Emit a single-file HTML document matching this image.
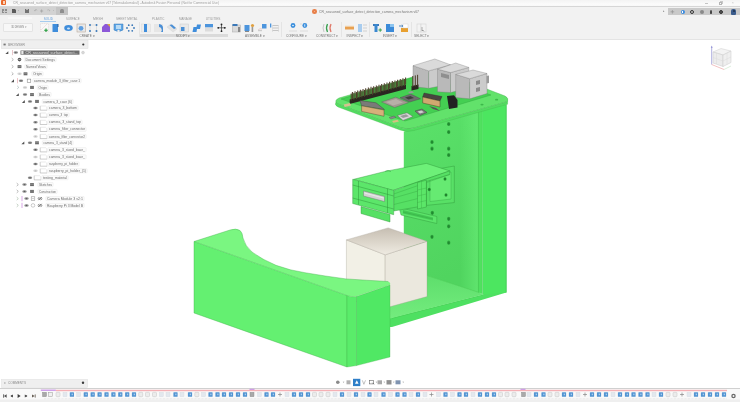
<!DOCTYPE html>
<html><head><meta charset="utf-8">
<style>
*{box-sizing:border-box}
html,body{margin:0;padding:0;width:740px;height:402px;overflow:hidden;background:#fff;font-family:"Liberation Sans",sans-serif;color:#444}
.a{position:absolute}
.t{white-space:nowrap;line-height:1}
</style></head><body>
<svg class="a" style="left:0;top:0" width="740" height="402" viewBox="0 0 740 402">
<defs>
<linearGradient id="gface" x1="0" y1="0" x2="0" y2="1"><stop offset="0" stop-color="#5de566"/><stop offset="1" stop-color="#62e86b"/></linearGradient>
<linearGradient id="gcubetop" x1="0.5" y1="0" x2="0.5" y2="1"><stop offset="0" stop-color="#c6beb2"/><stop offset="0.55" stop-color="#ddd7cc"/><stop offset="1" stop-color="#efebe2"/></linearGradient>
<linearGradient id="gfloor" x1="0" y1="0" x2="0" y2="1"><stop offset="0" stop-color="#5ede6c"/><stop offset="1" stop-color="#74ec7e"/></linearGradient><linearGradient id="gcol" x1="0" y1="0" x2="0.25" y2="1"><stop offset="0" stop-color="#5be26a"/><stop offset="0.5" stop-color="#55da64"/><stop offset="1" stop-color="#50d45f"/></linearGradient><linearGradient id="gcolh" x1="0" y1="0" x2="1" y2="0"><stop offset="0.75" stop-color="#6af078" stop-opacity="0"/><stop offset="1" stop-color="#6af078" stop-opacity="0.6"/></linearGradient>
</defs>
<polygon points="403.8,131.5 479,110.8 479,293 403.8,268" fill="url(#gcol)" />
<polygon points="403.8,131.5 479,110.8 479,293 403.8,268" fill="url(#gcolh)" />
<polygon points="478.4,111 482.4,110 482.4,294 478.4,293" fill="#50e15f" />
<path d="M478.4,111 V293 M482.4,110 V294" stroke="#38b848" stroke-width="0.5"/>
<polygon points="482.4,110 506.3,104.5 506.3,292.5 392,327 390,327 390,318 483.4,294.5" fill="#4ee061" />
<polygon points="482.4,110 506.3,104.5 506.3,292.5 482.8,294.5" fill="#4ce660" />
<path d="M506.2,104.5 V292.5" stroke="#3cbf4c" stroke-width="0.6"/>
<line x1="392" y1="318.3" x2="483.4" y2="294.6" stroke="#45c34e" stroke-width="0.5"/>
<polygon points="390,300 428,275.5 479,292.5 483.4,294.5 390,318.5" fill="url(#gfloor)" />
<line x1="404" y1="268" x2="479" y2="292.5" stroke="#47c850" stroke-width="0.5"/>
<ellipse cx="448.7" cy="124" rx="1.7" ry="2.1" fill="#34a842"/><ellipse cx="448.7" cy="124.2" rx="1.1" ry="1.4" fill="#208a30"/>
<ellipse cx="448.7" cy="132" rx="1.7" ry="2.1" fill="#34a842"/><ellipse cx="448.7" cy="132.2" rx="1.1" ry="1.4" fill="#208a30"/>
<ellipse cx="432" cy="142" rx="1.7" ry="2.1" fill="#34a842"/><ellipse cx="432" cy="142.2" rx="1.1" ry="1.4" fill="#208a30"/>
<ellipse cx="432" cy="148.7" rx="1.7" ry="2.1" fill="#34a842"/><ellipse cx="432" cy="148.89999999999998" rx="1.1" ry="1.4" fill="#208a30"/>
<ellipse cx="448.7" cy="148.7" rx="1.7" ry="2.1" fill="#34a842"/><ellipse cx="448.7" cy="148.89999999999998" rx="1.1" ry="1.4" fill="#208a30"/>
<ellipse cx="448.7" cy="155" rx="1.7" ry="2.1" fill="#34a842"/><ellipse cx="448.7" cy="155.2" rx="1.1" ry="1.4" fill="#208a30"/>
<ellipse cx="429.3" cy="190.4" rx="1.7" ry="2.1" fill="#34a842"/><ellipse cx="429.3" cy="190.6" rx="1.1" ry="1.4" fill="#208a30"/>
<ellipse cx="432.3" cy="212.8" rx="1.7" ry="2.1" fill="#34a842"/><ellipse cx="432.3" cy="213.0" rx="1.1" ry="1.4" fill="#208a30"/>
<ellipse cx="448.7" cy="218.8" rx="1.7" ry="2.1" fill="#34a842"/><ellipse cx="448.7" cy="219.0" rx="1.1" ry="1.4" fill="#208a30"/>
<ellipse cx="448.7" cy="226.3" rx="1.7" ry="2.1" fill="#34a842"/><ellipse cx="448.7" cy="226.5" rx="1.1" ry="1.4" fill="#208a30"/>
<ellipse cx="432" cy="236.8" rx="1.7" ry="2.1" fill="#34a842"/><ellipse cx="432" cy="237.0" rx="1.1" ry="1.4" fill="#208a30"/>
<ellipse cx="448.7" cy="242.7" rx="1.7" ry="2.1" fill="#34a842"/><ellipse cx="448.7" cy="242.89999999999998" rx="1.1" ry="1.4" fill="#208a30"/>
<polygon points="346.4,239.9 385.2,254.8 385.2,312 346.4,298" fill="#f2f0e6" stroke="#a59f93" stroke-width="0.35" stroke-linejoin="round" />
<polygon points="385.2,254.8 427,241.3 427,296.6 385.2,308" fill="#ebe8de" stroke="#a59f93" stroke-width="0.35" stroke-linejoin="round" />
<polygon points="346.4,239.9 388.2,227.9 427,241.3 385.2,254.8" fill="url(#gcubetop)" stroke="#a59f93" stroke-width="0.35" stroke-linejoin="round" />
<path d="M194,241.5 L230,230 Q236,228 240,230.5 Q242.5,232.5 243,238 Q245,246 252,252 Q262,259.5 276,265.3 Q290,270.5 305,272.7 Q326,276.3 346,278.9 Q366,280.3 388.2,281.5 Q391,282.5 390,284.8 L357,296 Q352,297.5 347,295.5 Z" fill="#7af681" />
<polygon points="194,241.5 347,295.5 347,367 194,313" fill="#64f071" stroke="#3fae48" stroke-width="0.4" stroke-linejoin="round" />
<path d="M347,295.5 Q352,297.5 356.5,296.5 L356.5,365.6 L347,367 Z" fill="#5aec6a" stroke="#3fae48" stroke-width="0.3" stroke-linejoin="round" />
<polygon points="356.5,296.5 390,285 390,357 356.5,365.6" fill="#50e864" stroke="#3fae48" stroke-width="0.3" stroke-linejoin="round" />
<path d="M194,241.5 L230,230 Q236,228 240,230.5 Q242.5,232.5 243,238 Q245,246 252,252 Q262,259.5 276,265.3 Q290,270.5 305,272.7 Q326,276.3 346,278.9 Q366,280.3 388.2,281.5" fill="none" stroke="#3fae48" stroke-width="0.4" stroke-linejoin="round" />
<polygon points="426.4,171 454.3,166 454.3,202.6 426.4,205.4" fill="#58e066" stroke="#2a8f36" stroke-width="0.4" stroke-linejoin="round" />
<polygon points="430,176 451,172 451,199 430,201.5" fill="#66ea72" stroke="#2a8f36" stroke-width="0.3" stroke-linejoin="round" />
<ellipse cx="429.3" cy="189.5" rx="1.5" ry="1.8" fill="#2a9a38"/><ellipse cx="429.3" cy="189.5" rx="0.9" ry="1.1" fill="#1e7a2a"/>
<ellipse cx="446" cy="195" rx="1.5" ry="1.8" fill="#2a9a38"/><ellipse cx="446" cy="195" rx="0.9" ry="1.1" fill="#1e7a2a"/>
<ellipse cx="445" cy="179" rx="1.5" ry="1.8" fill="#2a9a38"/><ellipse cx="445" cy="179" rx="0.9" ry="1.1" fill="#1e7a2a"/>
<polygon points="399,207.5 436.8,216.5 436.8,223.5 401,215" fill="#5ce46a" stroke="#2a8f36" stroke-width="0.4" stroke-linejoin="round" />
<polygon points="403,210 433,217.5 433,220.5 403,213.5" fill="#44c854" />
<path d="M403,212 L433,219" stroke="#2f9e3a" stroke-width="0.35"/>
<polygon points="353.6,179.3 386,171.2 426.4,163.4 449.7,170.9 392.8,190.4" fill="#6df078" stroke="#2a8f36" stroke-width="0.4" stroke-linejoin="round" />
<path d="M385,171.5 q3,-2 6,0" stroke="#2f9e3a" stroke-width="0.5" fill="#60e06c"/>
<polygon points="393.7,190.4 449.7,170.9 449.7,174.5 426.4,181.5 426.4,205.4 393.7,211" fill="#56e064" stroke="#2a8f36" stroke-width="0.4" stroke-linejoin="round" />
<path d="M393.7,198 L418,191 M393.7,204.5 L418,198.5 M393.7,194 L449.7,174.5" stroke="#2f9e3a" stroke-width="0.35" fill="none"/>
<polygon points="417.5,182.5 426.4,180.2 426.4,207 417.5,209" fill="#5be668" stroke="#2a8f36" stroke-width="0.4" stroke-linejoin="round" />
<path d="M417.5,190 L426.4,188 M417.5,196 L426.4,194 M417.5,202.5 L426.4,200.5 M421.5,181.5 v26.5" stroke="#2f9e3a" stroke-width="0.3" fill="none"/>
<polygon points="361,206.5 390,214.5 390,222 361,213.5" fill="#56e064" stroke="#2a8f36" stroke-width="0.4" stroke-linejoin="round" />
<polygon points="352.7,179.3 393.7,190.4 393.7,214.7 352.7,203.5" fill="#5ce66a" stroke="#2a8f36" stroke-width="0.4" stroke-linejoin="round" />
<path d="M352.7,185 L393.7,196 M352.7,198 L393.7,209 M358.5,181 v23.5 M387.5,188.8 v24" stroke="#2a8f36" stroke-width="0.45" fill="none"/>
<polygon points="363.5,191 384.5,196.5 384.5,201.5 363.5,196" fill="#d4d4d4" stroke="#6a6a6a" stroke-width="0.4" stroke-linejoin="round" />
<path d="M364.5,193 L383.5,198" stroke="#f4f4f4" stroke-width="0.7"/>
<path d="M339,98 L437,70 L505,96 Q509,98 507.6,101.6 L414,128 Q407,130 400,127.5 L338,104 Q333,101 339,98 Z" fill="#62e26b" stroke="#3fae48" stroke-width="0.4" stroke-linejoin="round" />
<path d="M336,102 Q334,105 338,107 L400,130 Q407,132.5 414,130.5 L507.6,104.2 L507.6,101.6 L414,128 Q407,130 400,127.5 L338,104 Z" fill="#52dc60" stroke="#3fae48" stroke-width="0.3" stroke-linejoin="round" />
<polygon points="341,99 428,73 491,95 405,121" fill="#44cf52" stroke="#2a9c38" stroke-width="0.35" stroke-linejoin="round" />
<ellipse cx="482" cy="104.6" rx="1.6" ry="0.9" fill="#3cb84a"/>
<ellipse cx="496.6" cy="99.7" rx="1.6" ry="0.9" fill="#3cb84a"/>
<polygon points="349.7,99.5 406,84.5 406,89 349.7,104" fill="#2a2720" />
<line x1="351.20" y1="100.50" x2="351.20" y2="93.50" stroke="#4e3e2a" stroke-width="1.05"/>
<line x1="353.86" y1="99.78" x2="353.86" y2="92.78" stroke="#4e3e2a" stroke-width="1.05"/>
<line x1="356.52" y1="99.06" x2="356.52" y2="92.06" stroke="#4e3e2a" stroke-width="1.05"/>
<line x1="359.18" y1="98.34" x2="359.18" y2="91.34" stroke="#4e3e2a" stroke-width="1.05"/>
<line x1="361.84" y1="97.62" x2="361.84" y2="90.62" stroke="#4e3e2a" stroke-width="1.05"/>
<line x1="364.50" y1="96.90" x2="364.50" y2="89.90" stroke="#4e3e2a" stroke-width="1.05"/>
<line x1="367.16" y1="96.18" x2="367.16" y2="89.18" stroke="#4e3e2a" stroke-width="1.05"/>
<line x1="369.82" y1="95.46" x2="369.82" y2="88.46" stroke="#4e3e2a" stroke-width="1.05"/>
<line x1="372.48" y1="94.74" x2="372.48" y2="87.74" stroke="#4e3e2a" stroke-width="1.05"/>
<line x1="375.14" y1="94.02" x2="375.14" y2="87.02" stroke="#4e3e2a" stroke-width="1.05"/>
<line x1="377.80" y1="93.30" x2="377.80" y2="86.30" stroke="#4e3e2a" stroke-width="1.05"/>
<line x1="380.46" y1="92.58" x2="380.46" y2="85.58" stroke="#4e3e2a" stroke-width="1.05"/>
<line x1="383.12" y1="91.86" x2="383.12" y2="84.86" stroke="#4e3e2a" stroke-width="1.05"/>
<line x1="385.78" y1="91.14" x2="385.78" y2="84.14" stroke="#4e3e2a" stroke-width="1.05"/>
<line x1="388.44" y1="90.42" x2="388.44" y2="83.42" stroke="#4e3e2a" stroke-width="1.05"/>
<line x1="391.10" y1="89.70" x2="391.10" y2="82.70" stroke="#4e3e2a" stroke-width="1.05"/>
<line x1="393.76" y1="88.98" x2="393.76" y2="81.98" stroke="#4e3e2a" stroke-width="1.05"/>
<line x1="396.42" y1="88.26" x2="396.42" y2="81.26" stroke="#4e3e2a" stroke-width="1.05"/>
<line x1="399.08" y1="87.54" x2="399.08" y2="80.54" stroke="#4e3e2a" stroke-width="1.05"/>
<line x1="401.74" y1="86.82" x2="401.74" y2="79.82" stroke="#4e3e2a" stroke-width="1.05"/>
<line x1="404.40" y1="86.10" x2="404.40" y2="79.10" stroke="#4e3e2a" stroke-width="1.05"/>
<line x1="352.40" y1="98.90" x2="352.40" y2="91.90" stroke="#4e3e2a" stroke-width="1.05"/>
<line x1="355.06" y1="98.18" x2="355.06" y2="91.18" stroke="#4e3e2a" stroke-width="1.05"/>
<line x1="357.72" y1="97.46" x2="357.72" y2="90.46" stroke="#4e3e2a" stroke-width="1.05"/>
<line x1="360.38" y1="96.74" x2="360.38" y2="89.74" stroke="#4e3e2a" stroke-width="1.05"/>
<line x1="363.04" y1="96.02" x2="363.04" y2="89.02" stroke="#4e3e2a" stroke-width="1.05"/>
<line x1="365.70" y1="95.30" x2="365.70" y2="88.30" stroke="#4e3e2a" stroke-width="1.05"/>
<line x1="368.36" y1="94.58" x2="368.36" y2="87.58" stroke="#4e3e2a" stroke-width="1.05"/>
<line x1="371.02" y1="93.86" x2="371.02" y2="86.86" stroke="#4e3e2a" stroke-width="1.05"/>
<line x1="373.68" y1="93.14" x2="373.68" y2="86.14" stroke="#4e3e2a" stroke-width="1.05"/>
<line x1="376.34" y1="92.42" x2="376.34" y2="85.42" stroke="#4e3e2a" stroke-width="1.05"/>
<line x1="379.00" y1="91.70" x2="379.00" y2="84.70" stroke="#4e3e2a" stroke-width="1.05"/>
<line x1="381.66" y1="90.98" x2="381.66" y2="83.98" stroke="#4e3e2a" stroke-width="1.05"/>
<line x1="384.32" y1="90.26" x2="384.32" y2="83.26" stroke="#4e3e2a" stroke-width="1.05"/>
<line x1="386.98" y1="89.54" x2="386.98" y2="82.54" stroke="#4e3e2a" stroke-width="1.05"/>
<line x1="389.64" y1="88.82" x2="389.64" y2="81.82" stroke="#4e3e2a" stroke-width="1.05"/>
<line x1="392.30" y1="88.10" x2="392.30" y2="81.10" stroke="#4e3e2a" stroke-width="1.05"/>
<line x1="394.96" y1="87.38" x2="394.96" y2="80.38" stroke="#4e3e2a" stroke-width="1.05"/>
<line x1="397.62" y1="86.66" x2="397.62" y2="79.66" stroke="#4e3e2a" stroke-width="1.05"/>
<line x1="400.28" y1="85.94" x2="400.28" y2="78.94" stroke="#4e3e2a" stroke-width="1.05"/>
<line x1="402.94" y1="85.22" x2="402.94" y2="78.22" stroke="#4e3e2a" stroke-width="1.05"/>
<line x1="405.60" y1="84.50" x2="405.60" y2="77.50" stroke="#4e3e2a" stroke-width="1.05"/>
<polygon points="413,65.7 428.7,70.9 428.7,88.3 413,86.6" fill="#b9b9b9" stroke="#7a7a7a" stroke-width="0.35" stroke-linejoin="round" />
<polygon points="428.7,70.9 450.5,64.8 450.5,84 428.7,88.3" fill="#cbcbcb" stroke="#7a7a7a" stroke-width="0.35" stroke-linejoin="round" />
<polygon points="413,65.7 434.8,59 450.5,64.8 428.7,70.9" fill="#dadada" stroke="#7a7a7a" stroke-width="0.35" stroke-linejoin="round" />
<polygon points="437.5,69.2 450.5,72.6 450.5,92.5 437.5,91.8" fill="#b9b9b9" stroke="#7a7a7a" stroke-width="0.35" stroke-linejoin="round" />
<polygon points="450.5,72.6 468.8,67.4 468.8,88 450.5,92.5" fill="#cbcbcb" stroke="#7a7a7a" stroke-width="0.35" stroke-linejoin="round" />
<polygon points="437.5,69.2 455.7,63 468.8,67.4 450.5,72.6" fill="#dadada" stroke="#7a7a7a" stroke-width="0.35" stroke-linejoin="round" />
<polygon points="441,73 449,75 449,79 441,77" fill="#8f8f8f" />
<polygon points="455.7,74.4 469.7,78.7 469.7,98.8 455.7,97.5" fill="#b9b9b9" stroke="#7a7a7a" stroke-width="0.35" stroke-linejoin="round" />
<polygon points="469.7,78.7 487,73.5 487,93.5 469.7,98.8" fill="#cbcbcb" stroke="#7a7a7a" stroke-width="0.35" stroke-linejoin="round" />
<polygon points="455.7,74.4 473,70 487,73.5 469.7,78.7" fill="#dadada" stroke="#7a7a7a" stroke-width="0.35" stroke-linejoin="round" />
<polygon points="476,81 480,80 480,84 476,85" fill="#8a8a8a" />
<polygon points="476,88 480,87 480,91 476,92" fill="#8a8a8a" />
<polygon points="486.5,76 489,75.5 489,83 486.5,83.5" fill="#9a9a9a" />
<polygon points="411.5,86 418.5,84.5 418.5,89 411.5,90.5" fill="#2a2720" />
<line x1="412.8" y1="87" x2="412.8" y2="76" stroke="#4e3e2a" stroke-width="1"/>
<line x1="415.3" y1="86.4" x2="415.3" y2="75.4" stroke="#4e3e2a" stroke-width="1"/>
<line x1="417.6" y1="85.8" x2="417.6" y2="74.8" stroke="#4e3e2a" stroke-width="1"/>
<polygon points="360,100.5 376,102.8 384.5,109.5 361.6,105.8" fill="#7a7a78" stroke="#3a3a3a" stroke-width="0.4" stroke-linejoin="round" />
<polygon points="361.6,105.8 384,110 384,116.3 361.6,111.4" fill="#d6b07a" stroke="#4a3a2a" stroke-width="0.4" stroke-linejoin="round" />
<polygon points="343.7,104.5 350,103 351,105.5 344.7,107" fill="#d8c090" />
<polygon points="381.6,102 395.7,97.2 408.6,102.6 394.6,107.5" fill="#a39a92" stroke="#555" stroke-width="0.35" stroke-linejoin="round" />
<polygon points="386,102 396,99 403,102.5 393,105.5" fill="#b8b0a8" />
<polygon points="400,97.7 410.8,94 420.5,98.8 409.7,102" fill="#6e6e6e" stroke="#444" stroke-width="0.35" stroke-linejoin="round" />
<polygon points="405,97.5 410.5,96 414,98 408.5,99.6" fill="#3e3e3e" />
<polygon points="408,92 412,91 414,92.5 410,93.5" fill="#999" />
<polygon points="424,93 442,96.5 440,101 422.7,97" fill="#4a4540" stroke="#2a2a2a" stroke-width="0.35" stroke-linejoin="round" />
<polygon points="422.7,97 440,101 440,107 422.7,103" fill="#cfa870" stroke="#3a2a1a" stroke-width="0.4" stroke-linejoin="round" />
<polygon points="447,96 454,95.3 457.5,100 457.5,107.5 449,109" fill="#222" />
<polygon points="429,106 436,108 440,111 433,109" fill="#555" />
<polygon points="397.3,115.5 407,112.8 413,116.5 403,120.4" fill="#d8d8d8" stroke="#555" stroke-width="0.4" stroke-linejoin="round" />
<polygon points="400,116 406,114.3 409,116.3 403,118" fill="#9a9a9a" />
<polygon points="389,117.5 394,116 396,117.5 391,119" fill="#8a8a8a" stroke="#444" stroke-width="0.3" stroke-linejoin="round" />
<polygon points="415,111 422,109 427,112.5 420,115.5" fill="#7a7a7a" stroke="#333" stroke-width="0.4" stroke-linejoin="round" />
<polygon points="417.5,111.5 421.5,110.4 424,112.3 420,113.5" fill="#cfcfcf" />
<polygon points="392,121 397.5,119.8 399,121.5 393.5,122.8" fill="#d8c080" />
</svg>
<div class="a" style="left:0px;top:0px;width:740px;height:6.5px;background:linear-gradient(#f3f3f3,#fbfbfb 60%,#f6f6f6)"></div>
<div class="a" style="left:0px;top:6.3px;width:740px;height:1px;background:#d6d6d6"></div>
<div class="a" style="left:1px;top:0px;width:5px;height:5px;background:#e9692c;border-radius:1px"></div>
<div class="a" style="left:2.5px;top:1px;width:2px;height:3px;background:#fbd3b8"></div>
<div class="a" style="left:705px;top:3.2px;width:3px;height:0.5px;background:#c4c4c4"></div>
<div class="a" style="left:719px;top:1.8px;width:3px;height:3px;border:0.5px solid #b5b5b5"></div>
<div class="a" style="left:720px;top:1px;width:3px;height:3px;border-top:0.5px solid #c8c8c8;border-right:0.5px solid #c8c8c8"></div>
<div class="a" style="left:0px;top:7.3px;width:740px;height:7.7px;background:#f2f2f2"></div>
<div class="a" style="left:0px;top:6.8px;width:68px;height:8.1px;background:#d2d2d2"></div>
<div class="a" style="left:55.8px;top:6.8px;width:12.2px;height:8.1px;background:#c4c4c4"></div>
<div class="a" style="left:2px;top:8.7px;width:5px;height:4.3px;background:#8c8c8c"></div>
<div class="a" style="left:2.5px;top:10.5px;width:4px;height:0.5px;background:#c8c8c8"></div>
<div class="a" style="left:4.3px;top:9.2px;width:0.5px;height:3.5px;background:#c8c8c8"></div>
<div class="a" style="left:12.3px;top:8.5px;width:3.4px;height:4.8px;background:#5a5a5a"></div>
<div class="a" style="left:14.5px;top:8.5px;width:1.2px;height:1.2px;background:#9a9a9a"></div>
<div class="a" style="left:25px;top:8.8px;width:4.3px;height:4.3px;background:#727272"></div>
<div class="a" style="left:25.8px;top:9px;width:2.6px;height:1.4px;background:#b5b5b5"></div>
<svg class="a" style="left:38px;top:8px" width="6" height="6" viewBox="38 8 6 6"><path d="M40 11 h3.2 M41.6 9.4 v3.2" stroke="#999" stroke-width="0.6"/></svg>
<div class="a" style="left:59.6px;top:9.2px;width:4.7px;height:4px;background:#8e8e8e;border-radius:1.5px 1.5px 0 0"></div>
<div class="a" style="left:312.4px;top:9.4px;width:4.6px;height:4.6px;background:#e8804a;border-radius:50%"></div>
<div class="a" style="left:313.9px;top:10.9px;width:1.6px;height:1.6px;background:#f6c0a0;border-radius:50%"></div>
<div class="a" style="left:667.5px;top:8px;width:72.5px;height:7.5px;background:#c9c9c9"></div>
<svg class="a" style="left:668px;top:8px" width="8" height="8" viewBox="668 8 8 8"><path d="M670.6 11.8 h3.6 M672.4 10 v3.6" stroke="#8a8a8a" stroke-width="0.6"/></svg>
<div class="a" style="left:680.5px;top:9.5px;width:4.5px;height:4.5px;background:#3d8de0;border-radius:50%"></div>
<div class="a" style="left:682.3px;top:10.5px;width:0.9px;height:2.5px;background:#fff"></div>
<div class="a" style="left:690px;top:9.7px;width:4px;height:4px;border:1.1px solid #333;border-radius:50%"></div>
<div class="a" style="left:699.5px;top:9.8px;width:4px;height:4px;background:#8a8a8a;border-radius:50%"></div>
<div class="a" style="left:709.8px;top:10px;width:2.4px;height:3.6px;background:#444;border-radius:50% 50% 30% 30%"></div>
<div class="a" style="left:718.5px;top:9.7px;width:4.2px;height:4.2px;background:#555;border-radius:50%;border:0.8px solid #333"></div>
<div class="a" style="left:731px;top:9px;width:5px;height:6px;background:#3a5b8c;border-radius:2px 2px 1px 1px"></div>
<div class="a" style="left:732.5px;top:9.5px;width:2px;height:2px;background:#1e2f4a;border-radius:50%"></div>
<div class="a" style="left:0px;top:15px;width:740px;height:24.5px;background:#f2f2f2"></div>
<div class="a" style="left:0px;top:39.3px;width:740px;height:0.7px;background:#e4e4e4"></div>
<div class="a" style="left:7.8px;top:17.4px;width:24px;height:1.8px;background:#f7f7f7"></div>
<div class="a" style="left:3.2px;top:23.2px;width:30px;height:9px;background:#f7f7f7;border:0.5px solid #e4e4e4;border-radius:1px"></div>
<div class="a" style="left:40px;top:21px;width:16px;height:0.8px;background:#a6cbee"></div>
<div class="a" style="left:139.5px;top:34px;width:88px;height:2.8px;background:#dadada"></div>
<div class="a" style="left:138.7px;top:22px;width:0.5px;height:15px;background:#e4e4e4"></div>
<div class="a" style="left:281px;top:22px;width:0.5px;height:15px;background:#e4e4e4"></div>
<div class="a" style="left:340.7px;top:22px;width:0.5px;height:15px;background:#e4e4e4"></div>
<div class="a" style="left:369px;top:22px;width:0.5px;height:15px;background:#e4e4e4"></div>
<div class="a" style="left:411px;top:22px;width:0.5px;height:15px;background:#e4e4e4"></div>
<svg class="a" style="left:0;top:0;will-change:transform" width="740" height="40" viewBox="0 0 740 40" font-family="Liberation Sans, sans-serif"><text x="13" y="3.75" font-size="3" fill="#a0a0a0" textLength="206" lengthAdjust="spacingAndGlyphs">CR_seasoned_surface_detect_detection_camera_mechanism v67 [Tekmakalomakul] - Autodesk Fusion Personal (Not for Commercial Use)</text><text x="731.5" y="4.17" font-size="4.2" fill="#c0c0c0">&#215;</text><text x="17.6" y="11.34" font-size="2.4" fill="#a0a0a0">&#9662;</text><text x="34" y="11.86" font-size="3.6" fill="#9a9a9a">&#8630;</text><text x="46.5" y="11.86" font-size="3.6" fill="#aaa">&#8631;</text><text x="52.7" y="11.34" font-size="2.4" fill="#aaa">&#9662;</text><text x="319" y="12.68" font-size="2.8" fill="#777" textLength="100" lengthAdjust="spacingAndGlyphs">CR_seasoned_surface_detect_detection_camera_mechanism v67</text><text x="662.5" y="12.15" font-size="3" fill="#888">&#9656;</text><text x="11.2" y="27.84" font-size="3.1" fill="#7a7a7a" textLength="12.7" lengthAdjust="spacingAndGlyphs">3D DESIGN</text><text x="25" y="27.68" font-size="2.8" fill="#999">&#9662;</text><text x="43.8" y="19.90" font-size="2.7" fill="#5f9ad6" textLength="9.2" lengthAdjust="spacingAndGlyphs">SOLID</text><text x="66" y="19.90" font-size="2.7" fill="#9a9a9a" textLength="13.6" lengthAdjust="spacingAndGlyphs">SURFACE</text><text x="93" y="19.90" font-size="2.7" fill="#9a9a9a" textLength="10" lengthAdjust="spacingAndGlyphs">MESH</text><text x="116" y="19.90" font-size="2.7" fill="#9a9a9a" textLength="21.5" lengthAdjust="spacingAndGlyphs">SHEET METAL</text><text x="152" y="19.90" font-size="2.7" fill="#9a9a9a" textLength="12.5" lengthAdjust="spacingAndGlyphs">PLASTIC</text><text x="179" y="19.90" font-size="2.7" fill="#9a9a9a" textLength="13" lengthAdjust="spacingAndGlyphs">MANAGE</text><text x="205.7" y="19.90" font-size="2.7" fill="#9a9a9a" textLength="14.8" lengthAdjust="spacingAndGlyphs">UTILITIES</text><text x="79.6" y="36.51" font-size="2.6" fill="#6e6e6e" textLength="15.4" lengthAdjust="spacingAndGlyphs">CREATE &#9662;</text><text x="176" y="36.51" font-size="2.6" fill="#6e6e6e" textLength="14" lengthAdjust="spacingAndGlyphs">MODIFY &#9662;</text><text x="245" y="36.51" font-size="2.6" fill="#6e6e6e" textLength="20" lengthAdjust="spacingAndGlyphs">ASSEMBLE &#9662;</text><text x="286" y="36.51" font-size="2.6" fill="#6e6e6e" textLength="21" lengthAdjust="spacingAndGlyphs">CONFIGURE &#9662;</text><text x="316" y="36.51" font-size="2.6" fill="#6e6e6e" textLength="22.7" lengthAdjust="spacingAndGlyphs">CONSTRUCT &#9662;</text><text x="346.6" y="36.51" font-size="2.6" fill="#6e6e6e" textLength="17.4" lengthAdjust="spacingAndGlyphs">INSPECT &#9662;</text><text x="382.7" y="36.51" font-size="2.6" fill="#6e6e6e" textLength="15" lengthAdjust="spacingAndGlyphs">INSERT &#9662;</text><text x="414" y="36.51" font-size="2.6" fill="#6e6e6e" textLength="16" lengthAdjust="spacingAndGlyphs">SELECT &#9662;</text></svg>
<svg class="a" style="left:0;top:0" width="740" height="40" viewBox="0 0 740 40">
<rect x="40.5" y="23.5" width="8" height="8" fill="#f8f8f8" stroke="#d8c8c8" stroke-width="0.5" stroke-dasharray="1 0.7"/>
<path d="M41 30 L47 24" stroke="#e0a0a0" stroke-width="0.5" stroke-dasharray="0.8 0.6"/>
<path d="M44.2 30.3 h3.6 M46 28.5 v3.6" stroke="#1f9a3a" stroke-width="1.1"/>
<rect x="52.5" y="24" width="5.5" height="8" fill="#3f8ddb"/><rect x="57.5" y="24" width="1" height="3" fill="#2a5f9a"/>
<ellipse cx="68.5" cy="28" rx="4.3" ry="3" fill="#3f8ddb"/><ellipse cx="68.5" cy="28.5" rx="1.5" ry="1" fill="#cfe3f5"/>
<rect x="77" y="24" width="8.5" height="8" fill="#e8e8e8" stroke="#b9a89a" stroke-width="0.6"/><circle cx="81" cy="28.3" r="2.4" fill="#5d9ee0"/>
<circle cx="90" cy="25" r="1" fill="#3a78b8"/>
<circle cx="96.5" cy="25" r="1" fill="#3a78b8"/>
<circle cx="90" cy="31" r="1" fill="#3a78b8"/>
<circle cx="96.5" cy="31" r="1" fill="#3a78b8"/>
<path d="M90 26 v4 M96.5 26 v4 M91 25 h4.5" stroke="#c8c8c8" stroke-width="0.5"/>
<path d="M102 32 L102 27 L105 24 L110 24 L110 32 Z" fill="#8c58d8"/><path d="M107 24 h3 v3 Z" fill="#d8b040"/>
<path d="M114 24 h9 v6 q-4.5 3 -9 0 Z" fill="#5ea6e6" stroke="#3878b8" stroke-width="0.5"/><rect x="116" y="25" width="5" height="4" fill="#b9dbf5"/><circle cx="118.5" cy="31" r="1.2" fill="#eee"/>
<circle cx="134.00" cy="28.00" r="0.9" fill="#3a78b8"/>
<circle cx="132.25" cy="30.86" r="0.9" fill="#3a78b8"/>
<circle cx="128.75" cy="30.86" r="0.9" fill="#3a78b8"/>
<circle cx="127.00" cy="28.00" r="0.9" fill="#3a78b8"/>
<circle cx="128.75" cy="25.14" r="0.9" fill="#3a78b8"/>
<circle cx="132.25" cy="25.14" r="0.9" fill="#3a78b8"/>
<rect x="141.5" y="24" width="9" height="8" fill="#ececec" stroke="#d4d4d4" stroke-width="0.4"/><rect x="144" y="24" width="3" height="8" fill="#3f8ddb"/>
<rect x="154" y="24" width="9" height="8" fill="#e6e6e6"/><path d="M159 24 A4.5 4 0 0 1 163 28 L163 32 L161 32 A3 3 0 0 0 159 27 Z" fill="#4a8fd6"/>
<path d="M167 27 L171 24 L177 29 L173 32 Z" fill="#e2e2e2" stroke="#cfcfcf" stroke-width="0.4"/><path d="M169.5 25 L172 24.5 L176 28 L174 29 Z" fill="#4a8fd6"/>
<rect x="180" y="24" width="8.5" height="8" fill="#e9e9e9" stroke="#c9c9c9" stroke-width="0.5"/><rect x="181" y="27" width="3.5" height="4" fill="#4a8fd6"/>
<path d="M192.5 32 L193.5 27 L196.5 27 L197 24.5 L201 24.5 L200 29 L197 29 L196.5 32 Z" fill="#3f8ddb"/>
<rect x="205" y="24" width="8" height="3.5" fill="#4d95dd"/><rect x="205" y="27.5" width="8" height="4" fill="#dcdcdc"/>
<path d="M221.5 24 v7.5 M218 27.8 h7.3" stroke="#333" stroke-width="0.7"/>
<circle cx="221.5" cy="24.4" r="0.9" fill="#222"/>
<circle cx="221.5" cy="31.2" r="0.9" fill="#222"/>
<circle cx="218.2" cy="27.8" r="0.9" fill="#222"/>
<circle cx="224.8" cy="27.8" r="0.9" fill="#222"/>
<rect x="232.5" y="25" width="8" height="7" fill="#dadada" stroke="#aaa" stroke-width="0.5"/><rect x="232.5" y="24" width="5" height="2" fill="#3a78b8"/><rect x="238" y="27" width="2" height="5" fill="#888"/>
<rect x="244.5" y="25" width="5" height="6" fill="#4d95dd"/><circle cx="252.5" cy="25.5" r="1.6" fill="#e0a040"/><rect x="251.6" y="27" width="1.6" height="5" fill="#999"/><rect x="245" y="31" width="4" height="1" fill="#888"/>
<rect x="262" y="24" width="4.5" height="4.5" fill="#4d95dd"/><path d="M258 30 q2 -2 4 -1" stroke="#d8a8a8" stroke-width="0.5" fill="none"/><rect x="258" y="30" width="4" height="1.2" fill="#ccc"/>
<rect x="270" y="23.5" width="1.3" height="4" fill="#4d95dd"/><path d="M272.5 25.5 h6 M272.5 28 h6 M272.5 30.5 h6" stroke="#9a9a9a" stroke-width="0.5"/><path d="M272.5 25.5 v6.5 M278.5 25.5 v6.5" stroke="#c8c8c8" stroke-width="0.4"/>
<circle cx="293" cy="25.5" r="2.4" fill="#3c8fdc"/><circle cx="293" cy="25.5" r="0.8" fill="#fff"/><path d="M289 31 h8" stroke="#ccc" stroke-width="0.6"/>
<circle cx="304.8" cy="25.5" r="2.4" fill="#3c8fdc"/><rect x="304.4" y="24.3" width="0.8" height="2.4" fill="#fff"/><path d="M300 31 h8 M300 24 h2" stroke="#ccc" stroke-width="0.6"/>
<path d="M324 24 q-2 4 0 8" stroke="#bbb" stroke-width="0.8" fill="none"/><path d="M327.5 24 q-2 4 0 8" stroke="#3aa052" stroke-width="1.3" fill="none"/><path d="M331 24 q-2 4 0 8" stroke="#e07a6a" stroke-width="1.3" fill="none"/>
<rect x="345" y="26.5" width="9" height="3" fill="#e8a050"/><rect x="345" y="25.8" width="9" height="0.7" fill="#f3d2a4"/>
<rect x="358" y="24" width="4" height="8" fill="#a8ccee"/><path d="M363 25 h4 M363 28 h4 M363 31 h4" stroke="#bbb" stroke-width="0.6"/>
<rect x="373" y="24" width="6" height="2" fill="#3a78b8"/><rect x="374.5" y="24" width="3" height="8" fill="#3a88d0"/><path d="M378.5 30 h3.5 M380.2 28.3 v3.5" stroke="#2a9a40" stroke-width="0.9"/>
<rect x="386" y="24" width="8" height="8" fill="#3b8ad8"/><rect x="390" y="24" width="4" height="3" fill="#8cc4ef"/>
<path d="M399 26 h4 l-1 -1.2 M403 26 l-1 1.2" stroke="#3a78b8" stroke-width="0.9" fill="none"/><rect x="401" y="28" width="7" height="4" fill="#e8a030"/><rect x="403" y="24" width="5" height="4" fill="#fff" stroke="#ccc" stroke-width="0.4"/>
<rect x="417" y="24" width="4" height="8" fill="#f3f3f3" stroke="#d0d0d0" stroke-width="0.5"/><rect x="421" y="24" width="5" height="8" fill="#f3f3f3" stroke="#d0d0d0" stroke-width="0.5"/><path d="M422 27 l0 4 l1 -1 l1 1.5" stroke="#666" stroke-width="0.5" fill="none"/>
</svg>
<svg class="a" style="left:0;top:0;will-change:transform" width="100" height="215" viewBox="0 0 100 215" font-family="Liberation Sans, sans-serif">
<rect x="1.5" y="40.6" width="86.5" height="7.9" fill="#efefef" stroke="#dcdcdc" stroke-width="0.5"/>
<rect x="3.5" y="43.6" width="2.2" height="1.8" fill="#777"/>
<text x="8" y="45.8" font-size="2.6" fill="#888" textLength="17" lengthAdjust="spacingAndGlyphs">BROWSER</text>
<circle cx="83.3" cy="44.5" r="1.1" fill="#333"/>
<path d="M5.4 54.1 L8.3 54.1 L8.3 51.2 Z" fill="#505050"/>
<rect x="12.0" y="50.0" width="0.6" height="5.2" fill="#d9a0a8"/>
<ellipse cx="15.8" cy="52.6" rx="2.2" ry="1.25" fill="#8e8e8e"/><circle cx="15.8" cy="52.6" r="0.65" fill="#5a5a5a"/>
<rect x="20.5" y="50.5" width="59" height="4.2" fill="#6f6f6f"/>
<rect x="21.3" y="51.0" width="2.2" height="3.2" fill="#e8e8e8"/>
<text x="25.5" y="53.7" font-size="3" fill="#e0e0e0" textLength="52" lengthAdjust="spacingAndGlyphs">CR_seasoned_surface_detect...</text>
<circle cx="83" cy="52.6" r="1.4" fill="#d8d8d8" stroke="#bbb" stroke-width="0.4"/>
<path d="M11.7 58.1 L13.3 59.6 L11.7 61.1" fill="none" stroke="#888" stroke-width="0.6"/>
<circle cx="19.5" cy="59.6" r="1.8" fill="#555"/><rect x="18.5" y="59.300000000000004" width="2" height="0.6" fill="#ddd"/>
<rect x="24.3" y="57.5" width="31.9" height="4.2" rx="0.8" fill="#fbfbfb" stroke="#e4e4e4" stroke-width="0.4"/>
<text x="25.5" y="60.7" font-size="3" fill="#6a6a6a" textLength="29.5" lengthAdjust="spacingAndGlyphs">Document Settings</text>
<path d="M11.7 65.1 L13.3 66.6 L11.7 68.1" fill="none" stroke="#888" stroke-width="0.6"/>
<rect x="17.6" y="65.1" width="3.8" height="3" fill="#6a6a6a"/><rect x="17.6" y="66.0" width="3.8" height="0.4" fill="#aaa"/>
<rect x="24.8" y="64.5" width="22.4" height="4.2" rx="0.8" fill="#fbfbfb" stroke="#e4e4e4" stroke-width="0.4"/>
<text x="26" y="67.69999999999999" font-size="3" fill="#6a6a6a" textLength="20" lengthAdjust="spacingAndGlyphs">Named Views</text>
<path d="M11.7 72.3 L13.3 73.8 L11.7 75.3" fill="none" stroke="#888" stroke-width="0.6"/>
<ellipse cx="19.5" cy="73.8" rx="2.2" ry="1.25" fill="#d4d4d4"/><circle cx="19.5" cy="73.8" r="0.65" fill="#bdbdbd"/>
<rect x="23.6" y="72.3" width="3.8" height="3" fill="#6a6a6a"/><rect x="23.6" y="73.2" width="3.8" height="0.4" fill="#aaa"/>
<rect x="31.8" y="71.7" width="11.4" height="4.2" rx="0.8" fill="#fbfbfb" stroke="#e4e4e4" stroke-width="0.4"/>
<text x="33" y="74.89999999999999" font-size="3" fill="#6a6a6a" textLength="9" lengthAdjust="spacingAndGlyphs">Origin</text>
<path d="M11.1 82.2 L14.0 82.2 L14.0 79.3 Z" fill="#505050"/>
<rect x="17.2" y="78.10000000000001" width="0.6" height="5.2" fill="#e29aa0"/>
<ellipse cx="21" cy="80.7" rx="2.2" ry="1.25" fill="#8e8e8e"/><circle cx="21" cy="80.7" r="0.65" fill="#5a5a5a"/>
<rect x="27.2" y="79.10000000000001" width="3.6" height="3.4" fill="none" stroke="#777" stroke-width="0.5"/>
<rect x="32.8" y="78.60000000000001" width="48.4" height="4.2" rx="0.8" fill="#fbfbfb" stroke="#e4e4e4" stroke-width="0.4"/>
<text x="34" y="81.8" font-size="3" fill="#6a6a6a" textLength="46" lengthAdjust="spacingAndGlyphs">camera_module_3_filter_case:1</text>
<path d="M17.2 85.9 L18.8 87.4 L17.2 88.9" fill="none" stroke="#9aa" stroke-width="0.6"/>
<ellipse cx="25" cy="87.4" rx="2.2" ry="1.25" fill="#d4d4d4"/><circle cx="25" cy="87.4" r="0.65" fill="#bdbdbd"/>
<rect x="30.1" y="85.9" width="3.8" height="3" fill="#6a6a6a"/><rect x="30.1" y="86.80000000000001" width="3.8" height="0.4" fill="#aaa"/>
<rect x="37.3" y="85.30000000000001" width="10.9" height="4.2" rx="0.8" fill="#fbfbfb" stroke="#e4e4e4" stroke-width="0.4"/>
<text x="38.5" y="88.5" font-size="3" fill="#6a6a6a" textLength="8.5" lengthAdjust="spacingAndGlyphs">Origin</text>
<path d="M15.9 96.1 L18.8 96.1 L18.8 93.19999999999999 Z" fill="#505050"/>
<ellipse cx="25" cy="94.6" rx="2.2" ry="1.25" fill="#8e8e8e"/><circle cx="25" cy="94.6" r="0.65" fill="#5a5a5a"/>
<rect x="30.1" y="93.1" width="3.8" height="3" fill="#6a6a6a"/><rect x="30.1" y="94.0" width="3.8" height="0.4" fill="#aaa"/>
<rect x="37.8" y="92.5" width="13.4" height="4.2" rx="0.8" fill="#fbfbfb" stroke="#e4e4e4" stroke-width="0.4"/>
<text x="39" y="95.69999999999999" font-size="3" fill="#6a6a6a" textLength="11" lengthAdjust="spacingAndGlyphs">Bodies</text>
<path d="M21.9 102.9 L24.8 102.9 L24.8 100.0 Z" fill="#505050"/>
<ellipse cx="30" cy="101.4" rx="2.2" ry="1.25" fill="#8e8e8e"/><circle cx="30" cy="101.4" r="0.65" fill="#5a5a5a"/>
<rect x="35.1" y="99.9" width="3.8" height="3" fill="#6a6a6a"/><rect x="35.1" y="100.80000000000001" width="3.8" height="0.4" fill="#aaa"/>
<rect x="42.3" y="99.30000000000001" width="30.9" height="4.2" rx="0.8" fill="#fbfbfb" stroke="#e4e4e4" stroke-width="0.4"/>
<text x="43.5" y="102.5" font-size="3" fill="#6a6a6a" textLength="28.5" lengthAdjust="spacingAndGlyphs">camera_3_case (6)</text>
<ellipse cx="35.5" cy="108" rx="2.2" ry="1.25" fill="#8e8e8e"/><circle cx="35.5" cy="108" r="0.65" fill="#5a5a5a"/>
<path d="M40.2 106 L40.2 110.2 L47.2 110.2" fill="none" stroke="#9a9a9a" stroke-width="0.5"/><path d="M40.2 106 L45.5 106 L46.8 107.2 L46.8 110.2" fill="none" stroke="#cfcfcf" stroke-width="0.45"/>
<rect x="47.8" y="105.9" width="30.4" height="4.2" rx="0.8" fill="#fbfbfb" stroke="#e4e4e4" stroke-width="0.4"/>
<text x="49" y="109.1" font-size="3" fill="#6a6a6a" textLength="28" lengthAdjust="spacingAndGlyphs">camera_3_bottom</text>
<ellipse cx="35.5" cy="115" rx="2.2" ry="1.25" fill="#8e8e8e"/><circle cx="35.5" cy="115" r="0.65" fill="#5a5a5a"/>
<path d="M40.2 113 L40.2 117.2 L47.2 117.2" fill="none" stroke="#9a9a9a" stroke-width="0.5"/><path d="M40.2 113 L45.5 113 L46.8 114.2 L46.8 117.2" fill="none" stroke="#cfcfcf" stroke-width="0.45"/>
<rect x="47.8" y="112.9" width="21.4" height="4.2" rx="0.8" fill="#fbfbfb" stroke="#e4e4e4" stroke-width="0.4"/>
<text x="49" y="116.1" font-size="3" fill="#6a6a6a" textLength="19" lengthAdjust="spacingAndGlyphs">camera_3_top</text>
<ellipse cx="35.5" cy="122.3" rx="2.2" ry="1.25" fill="#8e8e8e"/><circle cx="35.5" cy="122.3" r="0.65" fill="#5a5a5a"/>
<path d="M40.2 120.3 L40.2 124.5 L47.2 124.5" fill="none" stroke="#9a9a9a" stroke-width="0.5"/><path d="M40.2 120.3 L45.5 120.3 L46.8 121.5 L46.8 124.5" fill="none" stroke="#cfcfcf" stroke-width="0.45"/>
<rect x="47.8" y="120.2" width="34.4" height="4.2" rx="0.8" fill="#fbfbfb" stroke="#e4e4e4" stroke-width="0.4"/>
<text x="49" y="123.39999999999999" font-size="3" fill="#6a6a6a" textLength="32" lengthAdjust="spacingAndGlyphs">camera_3_stand_top</text>
<ellipse cx="35.5" cy="129.3" rx="2.2" ry="1.25" fill="#8e8e8e"/><circle cx="35.5" cy="129.3" r="0.65" fill="#5a5a5a"/>
<path d="M40.2 127.30000000000001 L40.2 131.5 L47.2 131.5" fill="none" stroke="#9a9a9a" stroke-width="0.5"/><path d="M40.2 127.30000000000001 L45.5 127.30000000000001 L46.8 128.5 L46.8 131.5" fill="none" stroke="#cfcfcf" stroke-width="0.45"/>
<rect x="47.8" y="127.20000000000002" width="38.4" height="4.2" rx="0.8" fill="#fbfbfb" stroke="#e4e4e4" stroke-width="0.4"/>
<text x="49" y="130.4" font-size="3" fill="#6a6a6a" textLength="36" lengthAdjust="spacingAndGlyphs">camera_filter_connector</text>
<ellipse cx="35.5" cy="136.4" rx="2.2" ry="1.25" fill="#d4d4d4"/><circle cx="35.5" cy="136.4" r="0.65" fill="#bdbdbd"/>
<path d="M40.2 134.4 L40.2 138.6 L47.2 138.6" fill="none" stroke="#9a9a9a" stroke-width="0.5"/><path d="M40.2 134.4 L45.5 134.4 L46.8 135.6 L46.8 138.6" fill="none" stroke="#cfcfcf" stroke-width="0.45"/>
<rect x="47.8" y="134.3" width="38.4" height="4.2" rx="0.8" fill="#fbfbfb" stroke="#e4e4e4" stroke-width="0.4"/>
<text x="49" y="137.5" font-size="3" fill="#6a6a6a" textLength="36" lengthAdjust="spacingAndGlyphs">camera_filter_connector2</text>
<path d="M21.4 144.3 L24.3 144.3 L24.3 141.4 Z" fill="#505050"/>
<ellipse cx="30" cy="142.8" rx="2.2" ry="1.25" fill="#8e8e8e"/><circle cx="30" cy="142.8" r="0.65" fill="#5a5a5a"/>
<rect x="35.1" y="141.3" width="3.8" height="3" fill="#6a6a6a"/><rect x="35.1" y="142.20000000000002" width="3.8" height="0.4" fill="#aaa"/>
<rect x="42.3" y="140.70000000000002" width="30.9" height="4.2" rx="0.8" fill="#fbfbfb" stroke="#e4e4e4" stroke-width="0.4"/>
<text x="43.5" y="143.9" font-size="3" fill="#6a6a6a" textLength="28.5" lengthAdjust="spacingAndGlyphs">camera_3_stand (4)</text>
<ellipse cx="35.5" cy="149.7" rx="2.2" ry="1.25" fill="#8e8e8e"/><circle cx="35.5" cy="149.7" r="0.65" fill="#5a5a5a"/>
<path d="M40.2 147.7 L40.2 151.89999999999998 L47.2 151.89999999999998" fill="none" stroke="#9a9a9a" stroke-width="0.5"/><path d="M40.2 147.7 L45.5 147.7 L46.8 148.89999999999998 L46.8 151.89999999999998" fill="none" stroke="#cfcfcf" stroke-width="0.45"/>
<rect x="47.8" y="147.6" width="38.4" height="4.2" rx="0.8" fill="#fbfbfb" stroke="#e4e4e4" stroke-width="0.4"/>
<text x="49" y="150.79999999999998" font-size="3" fill="#6a6a6a" textLength="36" lengthAdjust="spacingAndGlyphs">camera_3_stand_base_</text>
<ellipse cx="35.5" cy="156.9" rx="2.2" ry="1.25" fill="#d4d4d4"/><circle cx="35.5" cy="156.9" r="0.65" fill="#bdbdbd"/>
<path d="M40.2 154.9 L40.2 159.1 L47.2 159.1" fill="none" stroke="#9a9a9a" stroke-width="0.5"/><path d="M40.2 154.9 L45.5 154.9 L46.8 156.1 L46.8 159.1" fill="none" stroke="#cfcfcf" stroke-width="0.45"/>
<rect x="47.8" y="154.8" width="38.4" height="4.2" rx="0.8" fill="#fbfbfb" stroke="#e4e4e4" stroke-width="0.4"/>
<text x="49" y="158.0" font-size="3" fill="#6a6a6a" textLength="36" lengthAdjust="spacingAndGlyphs">camera_3_stand_base_</text>
<ellipse cx="35.5" cy="164" rx="2.2" ry="1.25" fill="#8e8e8e"/><circle cx="35.5" cy="164" r="0.65" fill="#5a5a5a"/>
<path d="M40.2 162 L40.2 166.2 L47.2 166.2" fill="none" stroke="#9a9a9a" stroke-width="0.5"/><path d="M40.2 162 L45.5 162 L46.8 163.2 L46.8 166.2" fill="none" stroke="#cfcfcf" stroke-width="0.45"/>
<rect x="47.8" y="161.9" width="31.4" height="4.2" rx="0.8" fill="#fbfbfb" stroke="#e4e4e4" stroke-width="0.4"/>
<text x="49" y="165.1" font-size="3" fill="#6a6a6a" textLength="29" lengthAdjust="spacingAndGlyphs">raspberry_pi_holder</text>
<ellipse cx="35.5" cy="170.8" rx="2.2" ry="1.25" fill="#d4d4d4"/><circle cx="35.5" cy="170.8" r="0.65" fill="#bdbdbd"/>
<path d="M40.2 168.8 L40.2 173.0 L47.2 173.0" fill="none" stroke="#9a9a9a" stroke-width="0.5"/><path d="M40.2 168.8 L45.5 168.8 L46.8 170.0 L46.8 173.0" fill="none" stroke="#cfcfcf" stroke-width="0.45"/>
<rect x="47.8" y="168.70000000000002" width="39.4" height="4.2" rx="0.8" fill="#fbfbfb" stroke="#e4e4e4" stroke-width="0.4"/>
<text x="49" y="171.9" font-size="3" fill="#6a6a6a" textLength="37" lengthAdjust="spacingAndGlyphs">raspberry_pi_holder_(1)</text>
<ellipse cx="30" cy="177.7" rx="2.2" ry="1.25" fill="#8e8e8e"/><circle cx="30" cy="177.7" r="0.65" fill="#5a5a5a"/>
<path d="M34.2 175.7 L34.2 179.89999999999998 L41.2 179.89999999999998" fill="none" stroke="#9a9a9a" stroke-width="0.5"/><path d="M34.2 175.7 L39.5 175.7 L40.8 176.89999999999998 L40.8 179.89999999999998" fill="none" stroke="#cfcfcf" stroke-width="0.45"/>
<rect x="41.8" y="175.6" width="26.4" height="4.2" rx="0.8" fill="#fbfbfb" stroke="#e4e4e4" stroke-width="0.4"/>
<text x="43" y="178.79999999999998" font-size="3" fill="#6a6a6a" textLength="24" lengthAdjust="spacingAndGlyphs">testing_material</text>
<path d="M16.7 183.1 L18.3 184.6 L16.7 186.1" fill="none" stroke="#888" stroke-width="0.6"/>
<ellipse cx="24.5" cy="184.6" rx="2.2" ry="1.25" fill="#8e8e8e"/><circle cx="24.5" cy="184.6" r="0.65" fill="#5a5a5a"/>
<rect x="30.1" y="183.1" width="3.8" height="3" fill="#6a6a6a"/><rect x="30.1" y="184.0" width="3.8" height="0.4" fill="#aaa"/>
<rect x="37.8" y="182.5" width="15.4" height="4.2" rx="0.8" fill="#fbfbfb" stroke="#e4e4e4" stroke-width="0.4"/>
<text x="39" y="185.7" font-size="3" fill="#6a6a6a" textLength="13" lengthAdjust="spacingAndGlyphs">Sketches</text>
<path d="M16.7 189.9 L18.3 191.4 L16.7 192.9" fill="none" stroke="#888" stroke-width="0.6"/>
<ellipse cx="24.5" cy="191.4" rx="2.2" ry="1.25" fill="#8e8e8e"/><circle cx="24.5" cy="191.4" r="0.65" fill="#5a5a5a"/>
<rect x="30.1" y="189.9" width="3.8" height="3" fill="#6a6a6a"/><rect x="30.1" y="190.8" width="3.8" height="0.4" fill="#aaa"/>
<rect x="37.8" y="189.3" width="19.4" height="4.2" rx="0.8" fill="#fbfbfb" stroke="#e4e4e4" stroke-width="0.4"/>
<text x="39" y="192.5" font-size="3" fill="#6a6a6a" textLength="17" lengthAdjust="spacingAndGlyphs">Construction</text>
<path d="M16.7 197.1 L18.3 198.6 L16.7 200.1" fill="none" stroke="#9ab09a" stroke-width="0.6"/>
<rect x="21.7" y="196.0" width="0.6" height="5.2" fill="#c070d8"/>
<ellipse cx="26.5" cy="198.6" rx="2.2" ry="1.25" fill="#8e8e8e"/><circle cx="26.5" cy="198.6" r="0.65" fill="#5a5a5a"/>
<rect x="31.2" y="196.79999999999998" width="3.6" height="3.6" fill="none" stroke="#888" stroke-width="0.5"/><path d="M32 198.6 h2" stroke="#888" stroke-width="0.4"/>
<path d="M38.5 200.1 L41.5 197.1" stroke="#333" stroke-width="1"/><path d="M38 198.9 q0 -1.5 1.5 -1.5 M42 198.29999999999998 q0 1.5 -1.5 1.5" stroke="#444" stroke-width="0.6" fill="none"/>
<rect x="45.8" y="196.5" width="38.4" height="4.2" rx="0.8" fill="#fbfbfb" stroke="#e4e4e4" stroke-width="0.4"/>
<text x="47" y="199.7" font-size="3" fill="#6a6a6a" textLength="36" lengthAdjust="spacingAndGlyphs">Camera Module 3 v2:1</text>
<path d="M16.7 203.9 L18.3 205.4 L16.7 206.9" fill="none" stroke="#9ab09a" stroke-width="0.6"/>
<rect x="21.7" y="202.8" width="0.6" height="5.2" fill="#c070d8"/>
<ellipse cx="26.5" cy="205.4" rx="2.2" ry="1.25" fill="#8e8e8e"/><circle cx="26.5" cy="205.4" r="0.65" fill="#5a5a5a"/>
<circle cx="33" cy="205.4" r="1.8" fill="none" stroke="#999" stroke-width="0.5"/>
<path d="M38.5 206.9 L41.5 203.9" stroke="#333" stroke-width="1"/><path d="M38 205.70000000000002 q0 -1.5 1.5 -1.5 M42 205.1 q0 1.5 -1.5 1.5" stroke="#444" stroke-width="0.6" fill="none"/>
<rect x="45.8" y="203.3" width="38.4" height="4.2" rx="0.8" fill="#fbfbfb" stroke="#e4e4e4" stroke-width="0.4"/>
<text x="47" y="206.5" font-size="3" fill="#6a6a6a" textLength="36" lengthAdjust="spacingAndGlyphs">Raspberry Pi 3 Model B</text>
</svg>
<svg class="a" style="left:0;top:370px;will-change:transform" width="740" height="32" viewBox="0 370 740 32" font-family="Liberation Sans, sans-serif">
<rect x="0" y="388" width="740" height="14" fill="#f9f9f9"/><rect x="0" y="399.4" width="740" height="2.6" fill="#efefef"/>
<rect x="0" y="388" width="740" height="1" fill="#d0d0d0"/>
<rect x="55.7" y="389.8" width="671.3" height="1.4" fill="#f5b0b5"/>
<rect x="40.8" y="389.6" width="15" height="1.2" fill="#c58ae6"/>
<rect x="249.5" y="388.8" width="5" height="1" fill="#c58ae6"/>
<rect x="520.5" y="388.8" width="5" height="1" fill="#c58ae6"/>
<rect x="1.5" y="379.3" width="86.2" height="8.1" fill="#efefef" stroke="#e0e0e0" stroke-width="0.5"/>
<rect x="4" y="382.2" width="1.6" height="1.6" fill="#bbb"/>
<text x="8" y="384.2" font-size="2.6" fill="#888" textLength="18" lengthAdjust="spacingAndGlyphs">COMMENTS</text>
<circle cx="83" cy="382.8" r="1.2" fill="#3a3a3a"/>
<rect x="3.2" y="394.3" width="0.9" height="3.4" fill="#555"/><path d="M6.6 394.2 L4 396 L6.6 397.8 Z" fill="#4a4a4a"/>
<path d="M13 394.5 L10.3 396 L13 397.5 Z" fill="#505050"/><circle cx="12" cy="396" r="1" fill="#555"/>
<path d="M17.6 394 L20.6 396 L17.6 398 Z" fill="#3a3a3a"/>
<path d="M24.8 394.5 L27.5 396 L24.8 397.5 Z" fill="#505050"/><circle cx="25.8" cy="396" r="1" fill="#555"/>
<path d="M32 394.4 L34.8 396 L32 397.6 Z" fill="#6a6258"/><rect x="34.8" y="394.4" width="0.8" height="3.2" fill="#6a6258"/>
<rect x="42.5" y="392.3" width="4" height="4.4" fill="#a9a9a9" stroke="#888" stroke-width="0.4"/>
<rect x="48.7" y="392.5" width="3.6" height="4" fill="#f0f0f0" stroke="#999" stroke-width="0.5"/>
<rect x="56.0" y="392.3" width="4" height="4.4" fill="#ececec" stroke="#c4c4c4" stroke-width="0.5" rx="0.8"/>
<rect x="63.0" y="392.3" width="4" height="4.4" fill="#e3e8ee" stroke="#d6dbe0" stroke-width="0.4"/>
<rect x="69.80000000000001" y="392.2" width="4.2" height="4.6" fill="#5294d2" rx="0.6"/><rect x="71.60000000000001" y="393.6" width="1.3" height="1.6" fill="#a9cdee"/>
<rect x="76.7" y="392.3" width="4" height="4.4" fill="#e3e8ee" stroke="#d6dbe0" stroke-width="0.4"/>
<rect x="83.7" y="392.2" width="4.2" height="4.6" fill="#5294d2" rx="0.6"/><rect x="85.5" y="393.6" width="1.3" height="1.6" fill="#a9cdee"/>
<rect x="90.60000000000001" y="392.2" width="4.2" height="4.6" fill="#5294d2" rx="0.6"/><rect x="92.4" y="393.6" width="1.3" height="1.6" fill="#a9cdee"/>
<rect x="97.5" y="392.2" width="4.2" height="4.6" fill="#5294d2" rx="0.6"/><rect x="99.3" y="393.6" width="1.3" height="1.6" fill="#a9cdee"/>
<rect x="104.4" y="392.2" width="4.2" height="4.6" fill="#5294d2" rx="0.6"/><rect x="106.2" y="393.6" width="1.3" height="1.6" fill="#a9cdee"/>
<rect x="111.30000000000001" y="392.2" width="4.2" height="4.6" fill="#5294d2" rx="0.6"/><rect x="113.10000000000001" y="393.6" width="1.3" height="1.6" fill="#a9cdee"/>
<rect x="118.2" y="392.2" width="4.2" height="4.6" fill="#5294d2" rx="0.6"/><rect x="120.0" y="393.6" width="1.3" height="1.6" fill="#a9cdee"/>
<rect x="125.10000000000001" y="392.2" width="4.2" height="4.6" fill="#5294d2" rx="0.6"/><rect x="126.9" y="393.6" width="1.3" height="1.6" fill="#a9cdee"/>
<rect x="131.9" y="392.2" width="4.2" height="4.6" fill="#5294d2" rx="0.6"/><rect x="133.7" y="393.6" width="1.3" height="1.6" fill="#a9cdee"/>
<rect x="138.7" y="392.3" width="4" height="4.4" fill="#ececec" stroke="#c4c4c4" stroke-width="0.5" rx="0.8"/>
<rect x="145.5" y="392.3" width="4" height="4.4" fill="#ececec" stroke="#c4c4c4" stroke-width="0.5" rx="0.8"/>
<rect x="152.5" y="392.3" width="4" height="4.4" fill="#ececec" stroke="#c4c4c4" stroke-width="0.5" rx="0.8"/>
<rect x="159.3" y="392.3" width="4" height="4.4" fill="#e3e8ee" stroke="#d6dbe0" stroke-width="0.4"/>
<rect x="166.0" y="392.3" width="4" height="4.4" fill="#e3e8ee" stroke="#d6dbe0" stroke-width="0.4"/>
<rect x="173.4" y="392.2" width="4.2" height="4.6" fill="#5294d2" rx="0.6"/><rect x="175.2" y="393.6" width="1.3" height="1.6" fill="#a9cdee"/>
<rect x="180.0" y="392.3" width="4" height="4.4" fill="#e3e8ee" stroke="#d6dbe0" stroke-width="0.4"/>
<rect x="187.9" y="392.2" width="4.2" height="4.6" fill="#5294d2" rx="0.6"/><rect x="189.7" y="393.6" width="1.3" height="1.6" fill="#a9cdee"/>
<rect x="194.8" y="392.3" width="4" height="4.4" fill="#ececec" stroke="#c4c4c4" stroke-width="0.5" rx="0.8"/>
<rect x="201.5" y="392.3" width="4" height="4.4" fill="#e3e8ee" stroke="#d6dbe0" stroke-width="0.4"/>
<rect x="208.4" y="392.2" width="4.2" height="4.6" fill="#5294d2" rx="0.6"/><rect x="210.2" y="393.6" width="1.3" height="1.6" fill="#a9cdee"/>
<rect x="215.4" y="392.2" width="4.2" height="4.6" fill="#5294d2" rx="0.6"/><rect x="217.2" y="393.6" width="1.3" height="1.6" fill="#a9cdee"/>
<rect x="221.9" y="392.2" width="4.2" height="4.6" fill="#5294d2" rx="0.6"/><rect x="223.7" y="393.6" width="1.3" height="1.6" fill="#a9cdee"/>
<rect x="228.9" y="392.2" width="4.2" height="4.6" fill="#5294d2" rx="0.6"/><rect x="230.7" y="393.6" width="1.3" height="1.6" fill="#a9cdee"/>
<rect x="235.9" y="392.2" width="4.2" height="4.6" fill="#5294d2" rx="0.6"/><rect x="237.7" y="393.6" width="1.3" height="1.6" fill="#a9cdee"/>
<rect x="242.9" y="392.2" width="4.2" height="4.6" fill="#5294d2" rx="0.6"/><rect x="244.7" y="393.6" width="1.3" height="1.6" fill="#a9cdee"/>
<rect x="250.0" y="392.3" width="4" height="4.4" fill="#a9a9a9" stroke="#888" stroke-width="0.4"/>
<rect x="257.4" y="392.3" width="4" height="4.4" fill="#e3e8ee" stroke="#d6dbe0" stroke-width="0.4"/>
<rect x="264.4" y="392.2" width="4.2" height="4.6" fill="#5294d2" rx="0.6"/><rect x="266.2" y="393.6" width="1.3" height="1.6" fill="#a9cdee"/>
<rect x="270.9" y="392.2" width="4.2" height="4.6" fill="#5294d2" rx="0.6"/><rect x="272.7" y="393.6" width="1.3" height="1.6" fill="#a9cdee"/>
<path d="M278.0 394.5 h4 M280.0 392.5 v4" stroke="#888" stroke-width="0.7"/>
<rect x="285.0" y="392.3" width="4" height="4.4" fill="#e3e8ee" stroke="#d6dbe0" stroke-width="0.4"/>
<rect x="291.9" y="392.2" width="4.2" height="4.6" fill="#5294d2" rx="0.6"/><rect x="293.7" y="393.6" width="1.3" height="1.6" fill="#a9cdee"/>
<rect x="298.9" y="392.2" width="4.2" height="4.6" fill="#5294d2" rx="0.6"/><rect x="300.7" y="393.6" width="1.3" height="1.6" fill="#a9cdee"/>
<rect x="305.9" y="392.2" width="4.2" height="4.6" fill="#5294d2" rx="0.6"/><rect x="307.7" y="393.6" width="1.3" height="1.6" fill="#a9cdee"/>
<rect x="312.5" y="392.3" width="4" height="4.4" fill="#ececec" stroke="#c4c4c4" stroke-width="0.5" rx="0.8"/>
<rect x="319.0" y="392.3" width="4" height="4.4" fill="#ececec" stroke="#c4c4c4" stroke-width="0.5" rx="0.8"/>
<rect x="326.0" y="392.3" width="4" height="4.4" fill="#ececec" stroke="#c4c4c4" stroke-width="0.5" rx="0.8"/>
<rect x="333.0" y="392.3" width="4" height="4.4" fill="#e3e8ee" stroke="#d6dbe0" stroke-width="0.4"/>
<rect x="339.9" y="392.2" width="4.2" height="4.6" fill="#5294d2" rx="0.6"/><rect x="341.7" y="393.6" width="1.3" height="1.6" fill="#a9cdee"/>
<rect x="347.0" y="392.3" width="4" height="4.4" fill="#e3e8ee" stroke="#d6dbe0" stroke-width="0.4"/>
<rect x="353.9" y="392.2" width="4.2" height="4.6" fill="#5294d2" rx="0.6"/><rect x="355.7" y="393.6" width="1.3" height="1.6" fill="#a9cdee"/>
<rect x="361.0" y="392.3" width="4" height="4.4" fill="#e3e8ee" stroke="#d6dbe0" stroke-width="0.4"/>
<rect x="367.4" y="392.2" width="4.2" height="4.6" fill="#5294d2" rx="0.6"/><rect x="369.2" y="393.6" width="1.3" height="1.6" fill="#a9cdee"/>
<rect x="374.0" y="392.3" width="4" height="4.4" fill="#e3e8ee" stroke="#d6dbe0" stroke-width="0.4"/>
<rect x="381.4" y="392.2" width="4.2" height="4.6" fill="#5294d2" rx="0.6"/><rect x="383.2" y="393.6" width="1.3" height="1.6" fill="#a9cdee"/>
<rect x="388.5" y="392.3" width="4" height="4.4" fill="#e3e8ee" stroke="#d6dbe0" stroke-width="0.4"/>
<rect x="395.4" y="392.2" width="4.2" height="4.6" fill="#5294d2" rx="0.6"/><rect x="397.2" y="393.6" width="1.3" height="1.6" fill="#a9cdee"/>
<rect x="402.4" y="392.2" width="4.2" height="4.6" fill="#5294d2" rx="0.6"/><rect x="404.2" y="393.6" width="1.3" height="1.6" fill="#a9cdee"/>
<rect x="409.0" y="392.3" width="4" height="4.4" fill="#e3e8ee" stroke="#d6dbe0" stroke-width="0.4"/>
<rect x="415.9" y="392.2" width="4.2" height="4.6" fill="#5294d2" rx="0.6"/><rect x="417.7" y="393.6" width="1.3" height="1.6" fill="#a9cdee"/>
<rect x="423.0" y="392.3" width="4" height="4.4" fill="#e3e8ee" stroke="#d6dbe0" stroke-width="0.4"/>
<path d="M429.5 394.5 h4 M431.5 392.5 v4" stroke="#888" stroke-width="0.7"/>
<rect x="436.5" y="392.3" width="4" height="4.4" fill="#e3e8ee" stroke="#d6dbe0" stroke-width="0.4"/>
<rect x="443.4" y="392.2" width="4.2" height="4.6" fill="#5294d2" rx="0.6"/><rect x="445.2" y="393.6" width="1.3" height="1.6" fill="#a9cdee"/>
<rect x="450.5" y="392.3" width="4" height="4.4" fill="#e3e8ee" stroke="#d6dbe0" stroke-width="0.4"/>
<rect x="457.4" y="392.2" width="4.2" height="4.6" fill="#5294d2" rx="0.6"/><rect x="459.2" y="393.6" width="1.3" height="1.6" fill="#a9cdee"/>
<rect x="463.9" y="392.2" width="4.2" height="4.6" fill="#5294d2" rx="0.6"/><rect x="465.7" y="393.6" width="1.3" height="1.6" fill="#a9cdee"/>
<rect x="471.0" y="392.3" width="4" height="4.4" fill="#e3e8ee" stroke="#d6dbe0" stroke-width="0.4"/>
<rect x="477.9" y="392.2" width="4.2" height="4.6" fill="#5294d2" rx="0.6"/><rect x="479.7" y="393.6" width="1.3" height="1.6" fill="#a9cdee"/>
<rect x="484.9" y="392.2" width="4.2" height="4.6" fill="#5294d2" rx="0.6"/><rect x="486.7" y="393.6" width="1.3" height="1.6" fill="#a9cdee"/>
<rect x="491.9" y="392.2" width="4.2" height="4.6" fill="#5294d2" rx="0.6"/><rect x="493.7" y="393.6" width="1.3" height="1.6" fill="#a9cdee"/>
<rect x="498.5" y="392.3" width="4" height="4.4" fill="#ececec" stroke="#c4c4c4" stroke-width="0.5" rx="0.8"/>
<rect x="505.0" y="392.3" width="4" height="4.4" fill="#ececec" stroke="#c4c4c4" stroke-width="0.5" rx="0.8"/>
<rect x="512.0" y="392.3" width="4" height="4.4" fill="#ececec" stroke="#c4c4c4" stroke-width="0.5" rx="0.8"/>
<rect x="521.5" y="392.3" width="4" height="4.4" fill="#a9a9a9" stroke="#888" stroke-width="0.4"/>
<rect x="527.0" y="392.3" width="4" height="4.4" fill="#e3e8ee" stroke="#d6dbe0" stroke-width="0.4"/>
<rect x="533.9" y="392.2" width="4.2" height="4.6" fill="#5294d2" rx="0.6"/><rect x="535.7" y="393.6" width="1.3" height="1.6" fill="#a9cdee"/>
<rect x="541.4" y="392.2" width="4.2" height="4.6" fill="#5294d2" rx="0.6"/><rect x="543.2" y="393.6" width="1.3" height="1.6" fill="#a9cdee"/>
<rect x="548.0" y="392.3" width="4" height="4.4" fill="#ececec" stroke="#c4c4c4" stroke-width="0.5" rx="0.8"/>
<rect x="555.0" y="392.3" width="4" height="4.4" fill="#ececec" stroke="#c4c4c4" stroke-width="0.5" rx="0.8"/>
<rect x="561.9" y="392.2" width="4.2" height="4.6" fill="#5294d2" rx="0.6"/><rect x="563.7" y="393.6" width="1.3" height="1.6" fill="#a9cdee"/>
<rect x="568.9" y="392.2" width="4.2" height="4.6" fill="#5294d2" rx="0.6"/><rect x="570.7" y="393.6" width="1.3" height="1.6" fill="#a9cdee"/>
<rect x="576.0" y="392.3" width="4" height="4.4" fill="#e3e8ee" stroke="#d6dbe0" stroke-width="0.4"/>
<path d="M583.0 394.5 h4 M585.0 392.5 v4" stroke="#888" stroke-width="0.7"/>
<rect x="589.9" y="392.2" width="4.2" height="4.6" fill="#5294d2" rx="0.6"/><rect x="591.7" y="393.6" width="1.3" height="1.6" fill="#a9cdee"/>
<rect x="596.9" y="392.2" width="4.2" height="4.6" fill="#5294d2" rx="0.6"/><rect x="598.7" y="393.6" width="1.3" height="1.6" fill="#a9cdee"/>
<rect x="603.9" y="392.2" width="4.2" height="4.6" fill="#5294d2" rx="0.6"/><rect x="605.7" y="393.6" width="1.3" height="1.6" fill="#a9cdee"/>
<rect x="611.0" y="392.3" width="4" height="4.4" fill="#e3e8ee" stroke="#d6dbe0" stroke-width="0.4"/>
<rect x="617.9" y="392.2" width="4.2" height="4.6" fill="#5294d2" rx="0.6"/><rect x="619.7" y="393.6" width="1.3" height="1.6" fill="#a9cdee"/>
<rect x="624.9" y="392.2" width="4.2" height="4.6" fill="#5294d2" rx="0.6"/><rect x="626.7" y="393.6" width="1.3" height="1.6" fill="#a9cdee"/>
<rect x="631.4" y="392.2" width="4.2" height="4.6" fill="#5294d2" rx="0.6"/><rect x="633.2" y="393.6" width="1.3" height="1.6" fill="#a9cdee"/>
<rect x="638.4" y="392.2" width="4.2" height="4.6" fill="#5294d2" rx="0.6"/><rect x="640.2" y="393.6" width="1.3" height="1.6" fill="#a9cdee"/>
<rect x="645.4" y="392.2" width="4.2" height="4.6" fill="#5294d2" rx="0.6"/><rect x="647.2" y="393.6" width="1.3" height="1.6" fill="#a9cdee"/>
<rect x="652.0" y="392.3" width="4" height="4.4" fill="#e3e8ee" stroke="#d6dbe0" stroke-width="0.4"/>
<rect x="658.9" y="392.2" width="4.2" height="4.6" fill="#5294d2" rx="0.6"/><rect x="660.7" y="393.6" width="1.3" height="1.6" fill="#a9cdee"/>
<rect x="666.0" y="392.3" width="4" height="4.4" fill="#ececec" stroke="#c4c4c4" stroke-width="0.5" rx="0.8"/>
<rect x="673.0" y="392.3" width="4" height="4.4" fill="#ececec" stroke="#c4c4c4" stroke-width="0.5" rx="0.8"/>
<path d="M680.0 394.5 h4 M682.0 392.5 v4" stroke="#888" stroke-width="0.7"/>
<rect x="687.0" y="392.3" width="4" height="4.4" fill="#e3e8ee" stroke="#d6dbe0" stroke-width="0.4"/>
<rect x="693.9" y="392.2" width="4.2" height="4.6" fill="#5294d2" rx="0.6"/><rect x="695.7" y="393.6" width="1.3" height="1.6" fill="#a9cdee"/>
<rect x="700.9" y="392.2" width="4.2" height="4.6" fill="#5294d2" rx="0.6"/><rect x="702.7" y="393.6" width="1.3" height="1.6" fill="#a9cdee"/>
<rect x="707.9" y="392.2" width="4.2" height="4.6" fill="#5294d2" rx="0.6"/><rect x="709.7" y="393.6" width="1.3" height="1.6" fill="#a9cdee"/>
<rect x="714.9" y="392.2" width="4.2" height="4.6" fill="#5294d2" rx="0.6"/><rect x="716.7" y="393.6" width="1.3" height="1.6" fill="#a9cdee"/>
<rect x="721.9" y="392.2" width="4.2" height="4.6" fill="#5294d2" rx="0.6"/><rect x="723.7" y="393.6" width="1.3" height="1.6" fill="#a9cdee"/>
<path d="M44 398.7 H727" stroke="#d0d0d0" stroke-width="0.5" stroke-dasharray="0.6 0.8"/>
<circle cx="733.5" cy="396" r="1.6" fill="none" stroke="#6a6a6a" stroke-width="1.3"/>
<circle cx="337.8" cy="382.3" r="1.8" fill="#8a8a8a"/><path d="M342.8 381.8 l0.8 1 l0.8 -1Z" fill="#888"/>
<rect x="346.5" y="380.3" width="4" height="4" fill="#b0b0b0"/>
<rect x="353" y="378.8" width="7.3" height="7.3" fill="#2f7fc8"/><path d="M355 383.8 l1.8 -3.5 l1.8 3.5Z" fill="#fff"/>
<path d="M362.3 380.3 l1.6 4 l1.6 -4" stroke="#999" stroke-width="0.6" fill="none"/>
<rect x="369.5" y="380.3" width="3.8" height="3.6" fill="none" stroke="#666" stroke-width="0.6"/><path d="M372.5 382.8 l1.5 1.5" stroke="#444" stroke-width="0.7"/><path d="M375.6 381.8 l0.8 1 l0.8 -1Z" fill="#888"/>
<rect x="377.5" y="380.3" width="4.5" height="4" fill="#a8a8a8"/><path d="M383.5 381.8 l0.8 1 l0.8 -1Z" fill="#888"/>
<rect x="386.5" y="380.1" width="5" height="4.4" fill="#8f8f8f"/><path d="M393 381.8 l0.8 1 l0.8 -1Z" fill="#888"/>
<rect x="395.5" y="380.3" width="5" height="4" fill="#7f93b0"/><path d="M402.4 381.8 l0.8 1 l0.8 -1Z" fill="#888"/>
</svg><svg class="a" style="left:700px;top:40px" width="40" height="35" viewBox="700 40 40 35">
<path d="M713,52 L721,48.5 L731,51 L723,55 Z" fill="#f3f3f3" stroke="#cfcfcf" stroke-width="0.5"/>
<path d="M713,52 L723,55 L723,66.5 L713,63 Z" fill="#ececec" stroke="#c8c8c8" stroke-width="0.5"/>
<path d="M723,55 L731,51 L731,62.5 L723,66.5 Z" fill="#efefef" stroke="#c8c8c8" stroke-width="0.5"/>
<path d="M713,57.5 L723,61 L731,57 M716.5,53 v11 M727,53 v11.5" stroke="#d6d6d6" stroke-width="0.4" fill="none"/>
<path d="M711.7,64.5 V46.5" stroke="#9a9ad8" stroke-width="0.8"/>
<path d="M710.8,48 L711.7,45.5 L712.6,48Z" fill="#9a9ad8"/>
<path d="M711.7,64.5 L724,69.5" stroke="#eca8a8" stroke-width="0.7"/>
<path d="M724,69.5 L731,66" stroke="#b8dcb8" stroke-width="0.5"/>
</svg>

</body></html>
